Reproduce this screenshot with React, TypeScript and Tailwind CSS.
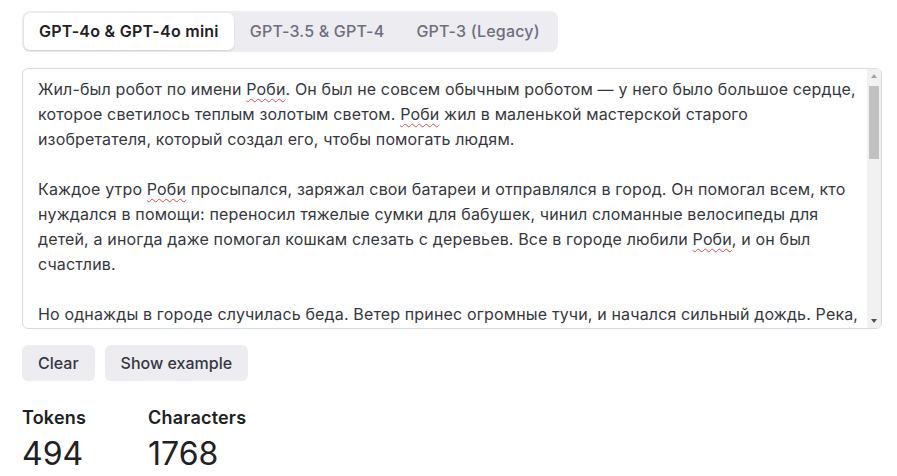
import type { ReactNode } from "react";

const Robi = () => (
  <span className="underline decoration-wavy decoration-[#e5484d] decoration-1 underline-offset-[3px]">Роби</span>
);

// lines as they wrap in the textarea
const lines: ReactNode[] = [
  <>Жил-был робот по имени <Robi />. Он был не совсем обычным роботом — у него было большое сердце,</>,
  <>которое светилось теплым золотым светом. <Robi /> жил в маленькой мастерской старого</>,
  <>изобретателя, который создал его, чтобы помогать людям.</>,
  null,
  <>Каждое утро <Robi /> просыпался, заряжал свои батареи и отправлялся в город. Он помогал всем, кто</>,
  <>нуждался в помощи: переносил тяжелые сумки для бабушек, чинил сломанные велосипеды для</>,
  <>детей, а иногда даже помогал кошкам слезать с деревьев. Все в городе любили <Robi />, и он был</>,
  <>счастлив.</>,
  null,
  <>Но однажды в городе случилась беда. Ветер принес огромные тучи, и начался сильный дождь. Река,</>,
];

const tabs = ["GPT-4o & GPT-4o mini", "GPT-3.5 & GPT-4", "GPT-3 (Legacy)"];

const Stat = ({ label, value }: { label: string; value: string }) => (
  <div>
    <div className="text-[18px] font-semibold leading-[24px] tracking-[0.2px] text-[#202123]">{label}</div>
    <div className="mt-[4px] text-[32px] leading-[40px] text-[#202123]">{value}</div>
  </div>
);

export default function App() {
  return (
    <div className="min-h-screen bg-white px-[22px] pt-[11px] text-[#353740]" style={{ fontFamily: "Inter, 'Noto Sans', sans-serif" }}>
      <div className="inline-flex rounded-lg bg-[#ececf1] p-[2px]">
        {tabs.map((t, i) => (
          <div
            key={t}
            className={
              i === 0
                ? "rounded-md bg-white px-[15px] py-[8px] text-[16px] font-semibold leading-[21px] tracking-[0.25px] text-[#202123] shadow-[0_1px_2px_rgba(0,0,0,0.12)]"
                : "px-[16px] py-[8px] text-[16px] font-medium leading-[21px] tracking-[0.2px] text-[#6e6e80]"
            }
          >
            {t}
          </div>
        ))}
      </div>

      <div className="mt-[16px] flex h-[261px] w-[860px] overflow-hidden rounded-md border border-[#d9d9e3]">
        <div className="flex-1 overflow-hidden pl-[15px] pt-[8px] text-[16px] leading-[25px] tracking-[0.15px]">
          {lines.map((l, i) => (
            <div key={i} className="h-[25px] whitespace-nowrap">
              {l}
            </div>
          ))}
        </div>
        <div className="flex w-[14px] flex-col items-center bg-[#f1f1f1]">
          <div className="mt-[5px] h-0 w-0 border-x-[3.5px] border-b-[4px] border-x-transparent border-b-[#a3a3a3]" />
          <div className="mt-[8px] h-[73px] w-[10px] bg-[#c1c1c1]" />
          <div className="flex-1" />
          <div className="mb-[5px] h-0 w-0 border-x-[3.5px] border-t-[4px] border-x-transparent border-t-[#505050]" />
        </div>
      </div>

      <div className="mt-[16px] flex gap-[10px]">
        <button className="rounded-md bg-[#ececf1] px-[16px] py-[7px] text-[16px] font-medium leading-[22px] text-[#353740]">Clear</button>
        <button className="rounded-md bg-[#ececf1] px-[16px] py-[7px] text-[16px] font-medium leading-[22px] text-[#353740]">Show example</button>
      </div>

      <div className="mt-[25px] flex gap-[62px]">
        <Stat label="Tokens" value="494" />
        <Stat label="Characters" value="1768" />
      </div>
    </div>
  );
}
